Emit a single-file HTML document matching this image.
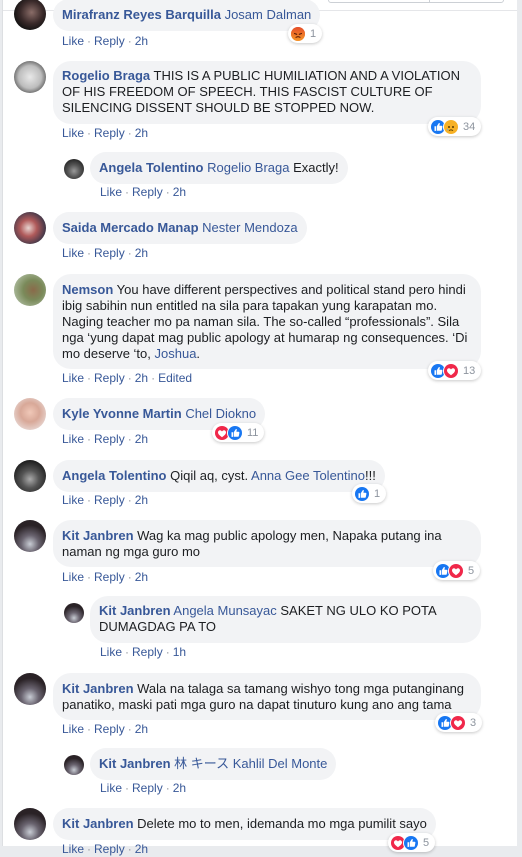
<!DOCTYPE html>
<html><head><meta charset="utf-8">
<style>
*{margin:0;padding:0;box-sizing:border-box}
body{width:522px;height:846px;overflow:hidden;background:#e9ebee;font-family:"Liberation Sans","Noto Sans CJK JP",Arial,sans-serif;position:relative}
#panel{position:absolute;left:2px;top:0;width:515px;height:846px;background:#fff;border-left:1px solid #dddfe2}
.topline{position:absolute;left:3px;top:10px;width:514px;height:1px;background:#e5e6e9}
.topbox{position:absolute;left:328px;top:-2px;width:176px;height:5px;border:1px solid #ccd0d5;border-radius:0 0 3px 3px;background:#fff}
.topbox:after{content:"";position:absolute;left:100px;top:0;width:1px;height:4px;background:#ccd0d5}
.av{position:absolute;border-radius:50%;overflow:hidden}
.big{width:32px;height:32px;left:14px}
.sm{width:20px;height:20px;left:64px}
.b{position:absolute;background:#f2f3f5;border-radius:18px;padding:8px 9px 8px 9px;font-size:13px;line-height:16px;color:#1c1e21;white-space:nowrap}
.n{color:#385898;font-weight:bold}
.l{color:#385898}
.a{position:absolute;font-size:12px;line-height:16px;color:#385898;white-space:nowrap}
.a i{font-style:normal;color:#90949c;padding:0 3px}
.r{position:absolute;height:19px;background:#fff;border-radius:10px;box-shadow:0 1px 3px rgba(0,0,0,.22);padding:1px 6px 0 2px;font-size:11px;line-height:17px;color:#8d949e;display:flex;align-items:center;white-space:nowrap}
.r svg{display:block}
.r .o{margin-left:-3px}
.r span{margin-left:4px}
</style></head><body>
<div id="panel"></div>
<div class="topbox"></div>
<div class="topline"></div>

<svg width="0" height="0" style="position:absolute">
<defs>
<g id="like"><circle cx="8" cy="8" r="8" fill="#fff"/><circle cx="8" cy="8" r="7" fill="#1877f2"/><path d="M4.5 7.3h1.6v4.6H4.5z M6.8 7.3l1.9-3c.5-.6 1.2-.3 1.1.4l-.4 2h2.1c.6 0 1 .5.9 1l-.6 3.3c-.1.5-.5.8-1 .8H6.8z" fill="#fff"/></g>
<g id="love"><circle cx="8" cy="8" r="8" fill="#fff"/><circle cx="8" cy="8" r="7" fill="#f0284a"/><path d="M8 12.2c-2.6-1.8-4-3.2-4-4.8 0-1.2.9-2.1 2-2.1.9 0 1.5.5 2 1.2.5-.7 1.1-1.2 2-1.2 1.1 0 2 .9 2 2.1 0 1.6-1.4 3-4 4.8z" fill="#fff"/></g>
<g id="angry"><circle cx="8" cy="8" r="8" fill="#fff"/><circle cx="8" cy="8" r="7" fill="#f0692a"/><circle cx="8" cy="8" r="7" fill="url(#ag)"/><path d="M4.5 7.5l2.2.8M11.5 7.5l-2.2.8M6 11.3c1.2-.8 2.8-.8 4 0" stroke="#5a1c0a" stroke-width="1.1" fill="none" stroke-linecap="round"/></g>
<g id="sad"><circle cx="8" cy="8" r="8" fill="#fff"/><circle cx="8" cy="8" r="7" fill="#f7b125"/><circle cx="6" cy="8" r="1" fill="#5a3d00"/><circle cx="10" cy="8" r="1" fill="#5a3d00"/><path d="M6 11.6c1.2-.9 2.8-.9 4 0" stroke="#5a3d00" stroke-width="1" fill="none"/><path d="M4.6 9.5c-.6 1-.6 1.8.2 1.9.7 0 .6-1 -.2-1.9z" fill="#5aa7f5"/></g>
<linearGradient id="ag" x1="0" y1="0" x2="0" y2="1"><stop offset="0" stop-color="#e0402a" stop-opacity=".7"/><stop offset="1" stop-color="#f7b125" stop-opacity=".6"/></linearGradient>
</defs></svg>

<!-- 1 Mirafranz -->
<div class="av big" style="top:-2px;background:radial-gradient(circle at 55% 45%,#8a6d68 0,#3a2a2a 45%,#111 75%)"></div>
<div class="b" style="left:53px;top:-1px"><span class="n">Mirafranz Reyes Barquilla</span> <span class="l">Josam Dalman</span></div>
<div class="a" style="left:62px;top:33px">Like<i>·</i>Reply<i>·</i>2h</div>
<div class="r" style="left:288px;top:24px"><svg width="16" height="16"><use href="#angry"/></svg><span>1</span></div>

<!-- 2 Rogelio -->
<div class="av big" style="top:61px;background:radial-gradient(circle at 50% 50%,#e8e8e8 0,#bdbdbd 50%,#555 80%,#222 100%)"></div>
<div class="b" style="left:53px;top:61px;width:428px;padding-top:7px;padding-bottom:8px"><span class="n">Rogelio Braga</span> THIS IS A PUBLIC HUMILIATION AND A VIOLATION<br>OF HIS FREEDOM OF SPEECH. THIS FASCIST CULTURE OF<br>SILENCING DISSENT SHOULD BE STOPPED NOW.</div>
<div class="a" style="left:62px;top:125px">Like<i>·</i>Reply<i>·</i>2h</div>
<div class="r" style="left:428px;top:117px"><svg width="16" height="16"><use href="#like"/></svg><svg class="o" width="16" height="16"><use href="#sad"/></svg><span>34</span></div>

<!-- 3 Angela reply -->
<div class="av sm" style="top:159px;background:radial-gradient(circle at 50% 60%,#999 0,#555 40%,#222 80%)"></div>
<div class="b" style="left:90px;top:152px"><span class="n">Angela Tolentino</span> <span class="l">Rogelio Braga</span> Exactly!</div>
<div class="a" style="left:100px;top:184px">Like<i>·</i>Reply<i>·</i>2h</div>

<!-- 4 Saida -->
<div class="av big" style="top:212px;background:radial-gradient(circle at 45% 50%,#e8d4d0 0,#b05a5a 35%,#4a3a4a 70%,#333 100%)"></div>
<div class="b" style="left:53px;top:212px"><span class="n">Saida Mercado Manap</span> <span class="l">Nester Mendoza</span></div>
<div class="a" style="left:62px;top:245px">Like<i>·</i>Reply<i>·</i>2h</div>

<!-- 5 Nemson -->
<div class="av big" style="top:274px;background:radial-gradient(circle at 60% 50%,#8a6a4a 0,#7a8a5a 40%,#aab89a 80%)"></div>
<div class="b" style="left:53px;top:274px;width:428px;padding-top:8px;padding-bottom:7px"><span class="n">Nemson</span> You have different perspectives and political stand pero hindi<br>ibig sabihin nun entitled na sila para tapakan yung karapatan mo.<br>Naging teacher mo pa naman sila. The so-called “professionals”. Sila<br>nga ‘yung dapat mag public apology at humarap ng consequences. ‘Di<br>mo deserve ‘to, <span class="l">Joshua</span>.</div>
<div class="a" style="left:62px;top:370px">Like<i>·</i>Reply<i>·</i>2h<i>·</i>Edited</div>
<div class="r" style="left:428px;top:361px"><svg width="16" height="16"><use href="#like"/></svg><svg class="o" width="16" height="16"><use href="#love"/></svg><span>13</span></div>

<!-- 6 Kyle -->
<div class="av big" style="top:398px;background:radial-gradient(circle at 50% 45%,#f0c8b8 0,#d8a898 40%,#e8d8d4 80%)"></div>
<div class="b" style="left:53px;top:398px"><span class="n">Kyle Yvonne Martin</span> <span class="l">Chel Diokno</span></div>
<div class="a" style="left:62px;top:431px">Like<i>·</i>Reply<i>·</i>2h</div>
<div class="r" style="left:212px;top:423px"><svg width="16" height="16"><use href="#love"/></svg><svg class="o" width="16" height="16"><use href="#like"/></svg><span>11</span></div>

<!-- 7 Angela -->
<div class="av big" style="top:460px;background:radial-gradient(circle at 50% 60%,#aaa 0,#555 35%,#1e1e1e 75%)"></div>
<div class="b" style="left:53px;top:460px"><span class="n">Angela Tolentino</span> Qiqil aq, cyst. <span class="l">Anna Gee Tolentino</span>!!!</div>
<div class="a" style="left:62px;top:492px">Like<i>·</i>Reply<i>·</i>2h</div>
<div class="r" style="left:352px;top:484px"><svg width="16" height="16"><use href="#like"/></svg><span>1</span></div>

<!-- 8 Kit -->
<div class="av big" style="top:520px;background:radial-gradient(circle at 50% 75%,#c8ccd4 0,#6a6470 30%,#2a2226 65%)"></div>
<div class="b" style="left:53px;top:520px;width:428px;padding-top:8px;padding-bottom:7px"><span class="n">Kit Janbren</span> Wag ka mag public apology men, Napaka putang ina<br>naman ng mga guro mo</div>
<div class="a" style="left:62px;top:569px">Like<i>·</i>Reply<i>·</i>2h</div>
<div class="r" style="left:433px;top:561px"><svg width="16" height="16"><use href="#like"/></svg><svg class="o" width="16" height="16"><use href="#love"/></svg><span>5</span></div>

<!-- 9 Kit reply -->
<div class="av sm" style="top:603px;background:radial-gradient(circle at 50% 75%,#c8ccd4 0,#6a6470 30%,#2a2226 65%)"></div>
<div class="b" style="left:90px;top:596px;width:391px;padding-top:7px;padding-bottom:8px"><span class="n">Kit Janbren</span> <span class="l">Angela Munsayac</span> SAKET NG ULO KO POTA<br>DUMAGDAG PA TO</div>
<div class="a" style="left:100px;top:644px">Like<i>·</i>Reply<i>·</i>1h</div>

<!-- 10 Kit -->
<div class="av big" style="top:673px;background:radial-gradient(circle at 50% 75%,#c8ccd4 0,#6a6470 30%,#2a2226 65%)"></div>
<div class="b" style="left:53px;top:673px;width:428px;padding-top:8px;padding-bottom:7px"><span class="n">Kit Janbren</span> Wala na talaga sa tamang wishyo tong mga putanginang<br>panatiko, maski pati mga guro na dapat tinuturo kung ano ang tama</div>
<div class="a" style="left:62px;top:721px">Like<i>·</i>Reply<i>·</i>2h</div>
<div class="r" style="left:435px;top:713px"><svg width="16" height="16"><use href="#like"/></svg><svg class="o" width="16" height="16"><use href="#love"/></svg><span>3</span></div>

<!-- 11 Kit reply -->
<div class="av sm" style="top:755px;background:radial-gradient(circle at 50% 75%,#c8ccd4 0,#6a6470 30%,#2a2226 65%)"></div>
<div class="b" style="left:90px;top:748px"><span class="n">Kit Janbren</span> <span class="l">林 キース Kahlil Del Monte</span></div>
<div class="a" style="left:100px;top:780px">Like<i>·</i>Reply<i>·</i>2h</div>

<!-- 12 Kit -->
<div class="av big" style="top:808px;background:radial-gradient(circle at 50% 75%,#c8ccd4 0,#6a6470 30%,#2a2226 65%)"></div>
<div class="b" style="left:53px;top:808px"><span class="n">Kit Janbren</span> Delete mo to men, idemanda mo mga pumilit sayo</div>
<div class="a" style="left:62px;top:841px">Like<i>·</i>Reply<i>·</i>2h</div>
<div class="r" style="left:388px;top:833px"><svg width="16" height="16"><use href="#love"/></svg><svg class="o" width="16" height="16"><use href="#like"/></svg><span>5</span></div>
</body></html>
